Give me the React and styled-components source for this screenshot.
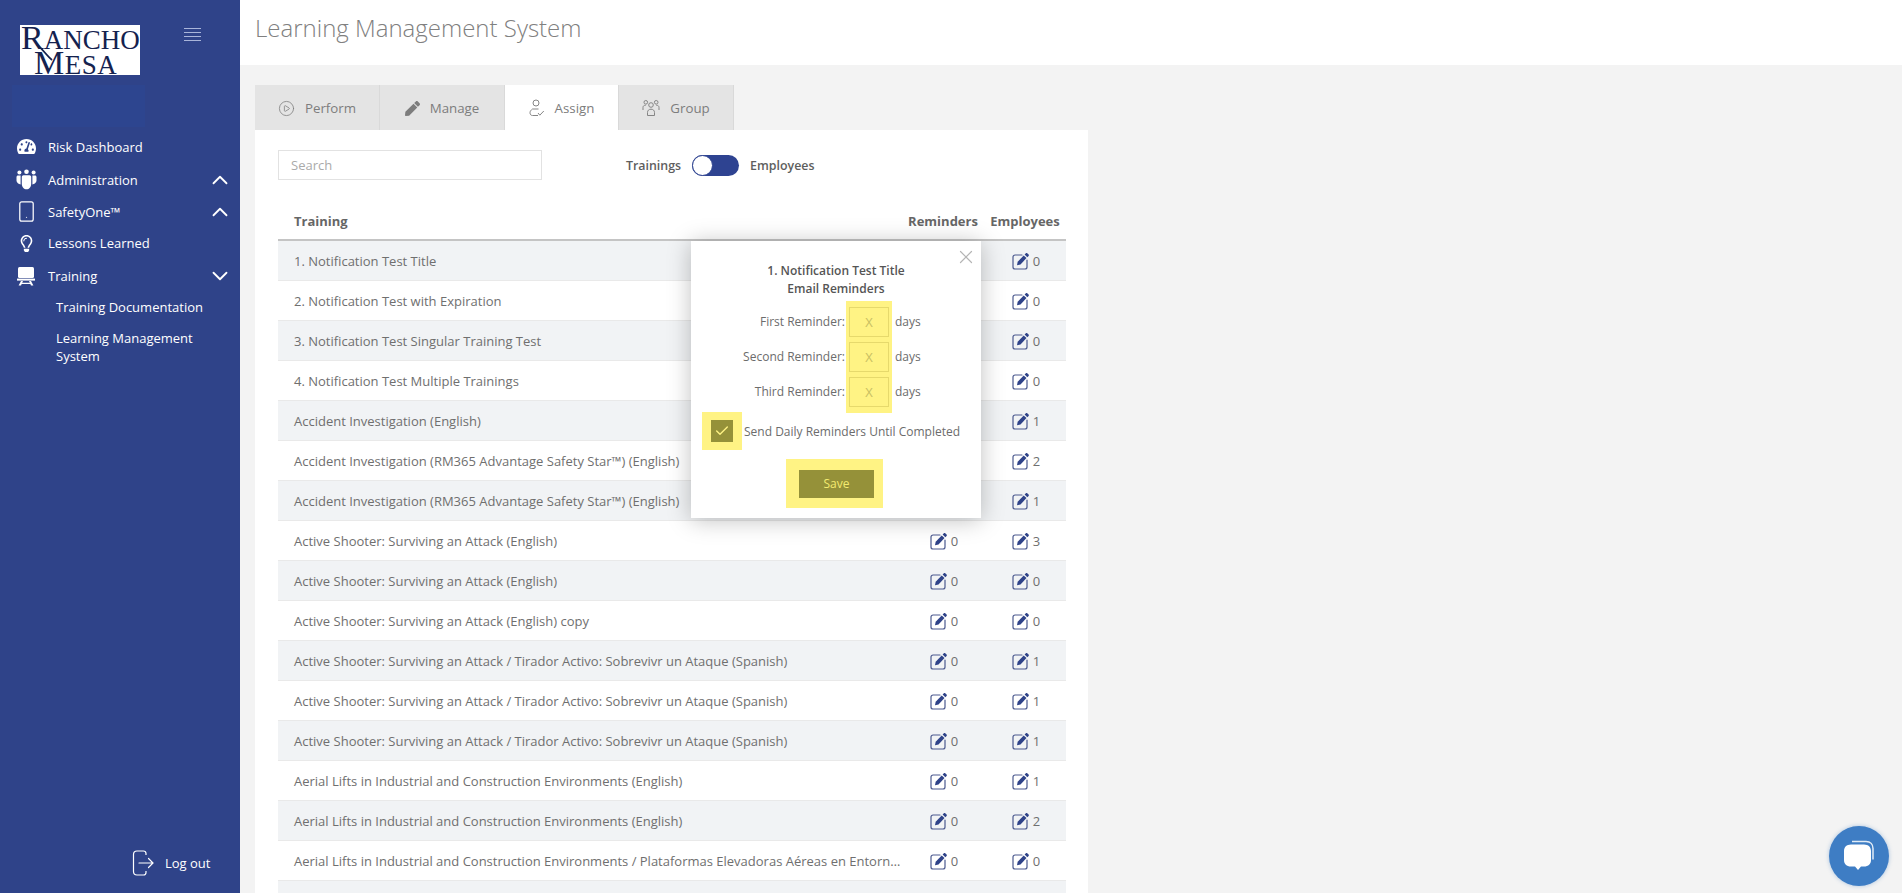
import React from "react";
import styled, { createGlobalStyle } from "styled-components";
import { FaTachometerAlt, FaPen, FaRegLightbulb } from "react-icons/fa";
import { Check, ChevronDown, ChevronUp, CirclePlay, Smartphone, X } from "lucide-react";

const NAVY = "#2f4389";
const YELLOW = "#fff384";
const OLIVE = "#959139";

const trainings = [
  ["1. Notification Test Title", 0, 0],
  ["2. Notification Test with Expiration", 0, 0],
  ["3. Notification Test Singular Training Test", 0, 0],
  ["4. Notification Test Multiple Trainings", 0, 0],
  ["Accident Investigation (English)", 0, 1],
  ["Accident Investigation (RM365 Advantage Safety Star™) (English)", 0, 2],
  ["Accident Investigation (RM365 Advantage Safety Star™) (English)", 0, 1],
  ["Active Shooter: Surviving an Attack (English)", 0, 3],
  ["Active Shooter: Surviving an Attack (English)", 0, 0],
  ["Active Shooter: Surviving an Attack (English) copy", 0, 0],
  ["Active Shooter: Surviving an Attack / Tirador Activo: Sobrevivr un Ataque (Spanish)", 0, 1],
  ["Active Shooter: Surviving an Attack / Tirador Activo: Sobrevivr un Ataque (Spanish)", 0, 1],
  ["Active Shooter: Surviving an Attack / Tirador Activo: Sobrevivr un Ataque (Spanish)", 0, 1],
  ["Aerial Lifts in Industrial and Construction Environments (English)", 0, 1],
  ["Aerial Lifts in Industrial and Construction Environments (English)", 0, 2],
  ["Aerial Lifts in Industrial and Construction Environments / Plataformas Elevadoras Aéreas en Entornos de Construcción", 0, 0],
  ["", null, null],
];

const GlobalStyle = createGlobalStyle`
  html, body {
    margin: 0;
    height: 100%;
    overflow: hidden;
    background: #f3f3f3;
    font-family: "Open Sans", "Liberation Sans", sans-serif;
  }
  * { box-sizing: border-box; }
`;

const EditIcon = () => (
  <svg width="18" height="18" viewBox="0 0 18 18" fill="none">
    <path
      d="M10 3H3a2 2 0 0 0-2 2v10a2 2 0 0 0 2 2h10a2 2 0 0 0 2-2V8"
      stroke="#4c5a8f"
      strokeWidth="1.2"
      strokeLinecap="round"
    />
    <path d="M5 13.2l.7-3.4 6-6.4 2.8 2.7-6 6.3z" fill={NAVY} />
    <path d="M12.6 2.5l1.3-1.3c.4-.4 1-.4 1.3 0l1.4 1.4c.4.4.4.9 0 1.3l-1.3 1.3z" fill={NAVY} />
  </svg>
);

const PeopleIcon = () => (
  <svg width="21" height="21" viewBox="0 0 21 21" fill="#fff">
    <circle cx="3.400" cy="3.400" r="2" />
    <circle cx="10.500" cy="2.800" r="2.300" />
    <circle cx="17.600" cy="3.400" r="2" />
    <path d="M.5 8c0-1 .7-1.600 1.500-1.600h2.600v9.200L3.300 15C1.600 14.400.5 13 .5 11.500z" />
    <path d="M20.500 8c0-1-.7-1.600-1.500-1.600h-2.600v9.200l1.300-.6c1.700-.6 2.800-2 2.800-3.500z" />
    <path d="M5.800 8c0-1 .8-1.700 1.700-1.700h6c.9 0 1.700.7 1.700 1.700v6.700c0 3.200-2.200 5.600-4.700 5.600s-4.700-2.400-4.700-5.600z" />
  </svg>
);

const BoardIcon = () => (
  <svg width="18" height="20" viewBox="0 0 18 20" fill="#fff">
    <rect x="1" y="1" width="16" height="11" rx="1.500" />
    <rect x="0" y="12.600" width="18" height="2" />
    <path d="M4 15h2l-2 4.600H1.600zM14 15h-2l2 4.600h2.400zM5 16.800h8V18H5z" />
  </svg>
);

const LogoutIcon = () => (
  <svg width="22" height="26" viewBox="0 0 22 26" fill="none" stroke="#fff" strokeWidth="1.2">
    <path d="M14 5V3.500C14 2 13 1 11.500 1H5C2.800 1 1.500 2.500 1.500 4.500v17C1.500 23.500 2.800 25 5 25h6.500c1.500 0 2.500-1 2.500-2.500V21" />
    <path d="M7 13h13.500M16.500 8.500l4.500 4.500-4.500 4.500" strokeLinecap="round" />
  </svg>
);

const AssignIcon = () => (
  <svg width="16" height="18" viewBox="0 0 16 18" fill="none" stroke="#858585" strokeWidth="1">
    <circle cx="7" cy="4" r="3" />
    <path d="M3.500 10h6M3.500 10c-1.500 1-2.500 2.300-2.500 3.700 0 1.800 1 2.800 2.500 2.800H9" />
    <path d="M9 14l1.800 2.200 4-4.200" />
  </svg>
);

const GroupIcon = () => (
  <svg width="18" height="18" viewBox="0 0 18 18" fill="none" stroke="#858585" strokeWidth="1">
    <circle cx="9" cy="6" r="2.300" />
    <path d="M5.500 16.500v-3c0-2 1.300-3.300 3.500-3.300s3.500 1.300 3.500 3.300v3z" />
    <circle cx="3.800" cy="3.300" r="1.800" />
    <circle cx="14.200" cy="3.300" r="1.800" />
    <path d="M1 11V8.500C1 7 2 6.200 3.800 6.200M17 11V8.500c0-1.500-1-2.300-2.800-2.300" />
  </svg>
);

const ChatIcon = () => (
  <svg width="34" height="32" viewBox="0 0 34 32" fill="#fff">
    <path
      d="M10 1.500h14c4.500 0 7 3 7 7v11"
      fill="none"
      stroke="#fff"
      strokeWidth="1.500"
      opacity="0.85"
    />
    <path d="M9 4.500h13c4.500 0 7 2.800 7 6.500v9c0 4-2.500 6.500-7 6.500h-3L16 30l-3-3.500H9c-4.500 0-7-2.500-7-6.500v-9c0-3.700 2.500-6.500 7-6.500z" />
  </svg>
);

const App = () => {
  return (
    <Page>
      <GlobalStyle />
      <Sidebar>
        <SideTop>
          <Logo>
            <LogoLine>
              <LogoCap>R</LogoCap>ANCHO
            </LogoLine>
            <LogoLine indent>
              <LogoCap>M</LogoCap>ESA
            </LogoLine>
            <LogoSwash viewBox="0 0 120 50" fill="none" stroke="#14224f">
              <path d="M17 20c5 3 9 10 15 15" strokeWidth="1.800" />
            </LogoSwash>
          </Logo>
          <Burger>
            <span />
            <span />
            <span />
            <span />
          </Burger>
        </SideTop>
        <LogoShade />
        <Nav>
          <NavItem height={33}>
            <NavIcon><FaTachometerAlt size={19} /></NavIcon>
            Risk Dashboard
          </NavItem>
          <NavItem height={33}>
            <NavIcon><PeopleIcon /></NavIcon>
            Administration
            <NavArrow><ChevronUp size={26} strokeWidth={1.700} /></NavArrow>
          </NavItem>
          <NavItem height={31}>
            <NavIcon><Smartphone size={23} strokeWidth={1.300} /></NavIcon>
            SafetyOne™
            <NavArrow><ChevronUp size={26} strokeWidth={1.700} /></NavArrow>
          </NavItem>
          <NavItem height={32}>
            <NavIcon><FaRegLightbulb size={17} /></NavIcon>
            Lessons Learned
          </NavItem>
          <NavItem height={33}>
            <NavIcon><BoardIcon /></NavIcon>
            Training
            <NavArrow><ChevronDown size={26} strokeWidth={1.700} /></NavArrow>
          </NavItem>
          <SubItem>Training Documentation</SubItem>
          <SubItem>Learning Management System</SubItem>
        </Nav>
        <Logout>
          <LogoutIcon />
          Log out
        </Logout>
      </Sidebar>

      <Main>
        <Header>Learning Management System</Header>
        <Content>
          <Tabs>
            <Tab width={125}><CirclePlay size={17} strokeWidth={1.100} />Perform</Tab>
            <Tab width={125}><FaPen size={15} />Manage</Tab>
            <Tab width={114} active><AssignIcon />Assign</Tab>
            <Tab width={115}><GroupIcon />Group</Tab>
          </Tabs>
          <Panel>
            <Controls>
              <Search>Search</Search>
              <ToggleWrap>
                <ToggleLabel>Trainings</ToggleLabel>
                <Toggle><Knob /></Toggle>
                <ToggleLabel>Employees</ToggleLabel>
              </ToggleWrap>
            </Controls>
            <TableWrap>
              <TableHead>
                <HeadTitle>Training</HeadTitle>
                <HeadCell>Reminders</HeadCell>
                <HeadCell>Employees</HeadCell>
              </TableHead>
              {trainings.map(([title, reminders, employees], i) => (
                <Row key={i} striped={i % 2 === 0}>
                  <RowTitle>{title}</RowTitle>
                  <Count>
                    {reminders !== null && <><EditIcon />{reminders}</>}
                  </Count>
                  <Count>
                    {employees !== null && <><EditIcon />{employees}</>}
                  </Count>
                </Row>
              ))}

              <Modal>
                <CloseBtn><X size={22} strokeWidth={1.300} /></CloseBtn>
                <ModalTitle>
                  1. Notification Test Title
                  <br />
                  Email Reminders
                </ModalTitle>
                <Form>
                  <LabelCol>
                    <FormText>First Reminder:</FormText>
                    <FormText>Second Reminder:</FormText>
                    <FormText>Third Reminder:</FormText>
                  </LabelCol>
                  <InputCol>
                    <DayInput>X</DayInput>
                    <DayInput>X</DayInput>
                    <DayInput>X</DayInput>
                  </InputCol>
                  <DaysCol>
                    <FormText>days</FormText>
                    <FormText>days</FormText>
                    <FormText>days</FormText>
                  </DaysCol>
                </Form>
                <CheckRow>
                  <CheckHighlight>
                    <CheckBox><Check size={16} strokeWidth={2} /></CheckBox>
                  </CheckHighlight>
                  <CheckLabel>Send Daily Reminders Until Completed</CheckLabel>
                </CheckRow>
                <SaveHighlight>
                  <SaveBtn>Save</SaveBtn>
                </SaveHighlight>
              </Modal>
            </TableWrap>
          </Panel>
        </Content>
      </Main>

      <ChatBubble><ChatIcon /></ChatBubble>
    </Page>
  );
};

const Page = styled.div`
  display: flex;
  height: 100vh;
  overflow: hidden;
`;

const Sidebar = styled.aside`
  width: 240px;
  flex-shrink: 0;
  background: ${NAVY};
  color: #fff;
  display: flex;
  flex-direction: column;
  padding-top: 25px;
`;

const SideTop = styled.div`
  display: flex;
  align-items: flex-start;
  padding-left: 20px;
  height: 50px;
`;

const Logo = styled.div`
  position: relative;
  width: 120px;
  height: 50px;
  background: #fff;
  color: #14224f;
  font-family: "Liberation Serif", serif;
  display: flex;
  flex-direction: column;
`;

const LogoLine = styled.div`
  font-size: 27px;
  line-height: 25px;
  height: 25px;
  white-space: nowrap;
  letter-spacing: ${({ indent }) => (indent ? "0.5px" : "0")};
  padding-left: ${({ indent }) => (indent ? "14px" : "1px")};
`;

const LogoCap = styled.span`
  font-size: 34px;
`;

const LogoSwash = styled.svg`
  position: absolute;
  inset: 0;
  width: 100%;
  height: 100%;
`;

const Burger = styled.div`
  margin: 3px 0 0 44px;
  width: 17px;
  display: flex;
  flex-direction: column;
  gap: 3px;

  span {
    display: block;
    height: 1px;
    background: #a9b5da;
  }
`;

const LogoShade = styled.div`
  height: 42px;
  margin: 10px 95px 0 12px;
  background: #2d458f;
`;

const Nav = styled.nav`
  display: flex;
  flex-direction: column;
  margin-top: 3px;
  font-size: 13px;
`;

const NavItem = styled.div`
  height: ${({ height }) => height}px;
  display: flex;
  align-items: center;
  padding: 0 7px 0 16px;
`;

const NavIcon = styled.span`
  width: 20px;
  margin-right: 12px;
  flex-shrink: 0;
  display: flex;
  justify-content: center;

  svg {
    flex-shrink: 0;
  }
`;

const NavArrow = styled.span`
  margin-left: auto;
  display: flex;
`;

const SubItem = styled.div`
  padding: 0 30px 0 56px;
  line-height: 18px;
  margin: 6px 0 7px;
  font-size: 13px;
`;

const Logout = styled.div`
  margin-top: auto;
  margin-bottom: 17px;
  padding-left: 132px;
  display: flex;
  align-items: center;
  gap: 11px;
  font-size: 13px;
`;

const Main = styled.main`
  flex: 1;
  min-width: 0;
  display: flex;
  flex-direction: column;
`;

const Header = styled.header`
  height: 65px;
  flex-shrink: 0;
  background: #fff;
  color: #808080;
  font-size: 24px;
  font-weight: 300;
  padding: 9px 0 0 15px;
  line-height: 38px;
`;

const Content = styled.div`
  padding: 20px 0 0 15px;
`;

const Tabs = styled.div`
  display: flex;
  height: 45px;
`;

const Tab = styled.div`
  width: ${({ width }) => width}px;
  background: ${({ active }) => (active ? "#fff" : "#e4e4e4")};
  border-right: 1px solid #d9d9d9;
  color: #7d7d7d;
  font-size: 13.300px;
  display: flex;
  align-items: center;
  justify-content: center;
  gap: 10px;
  padding-top: 1px;
`;

const Panel = styled.section`
  width: 833px;
  height: 800px;
  background: #fff;
  padding: 20px 0 0 23px;
`;

const Controls = styled.div`
  display: flex;
  align-items: center;
  height: 30px;
`;

const Search = styled.div`
  width: 264px;
  height: 30px;
  border: 1px solid #e2e2e2;
  color: #aaa;
  font-size: 13px;
  line-height: 28px;
  padding-left: 12px;
`;

const ToggleWrap = styled.div`
  display: flex;
  align-items: center;
  gap: 11px;
  margin-left: 84px;
`;

const ToggleLabel = styled.span`
  font-size: 12.400px;
  font-weight: 600;
  color: #5e5e5e;
`;

const Toggle = styled.div`
  width: 47px;
  height: 21px;
  border-radius: 11px;
  background: #2e4391;
  display: flex;
`;

const Knob = styled.div`
  width: 21px;
  height: 21px;
  border-radius: 50%;
  background: #fff;
  border: 1px solid #2e4391;
`;

const TableWrap = styled.div`
  position: relative;
  margin-top: 25px;
  width: 788px;
`;

const gridCols = "1fr 82px 82px";

const TableHead = styled.div`
  display: grid;
  grid-template-columns: ${gridCols};
  align-items: center;
  height: 36px;
  border-bottom: 2px solid #c4c4c4;
  font-size: 13px;
  font-weight: 700;
  color: #666;
  padding-bottom: 3px;
`;

const HeadTitle = styled.div`
  padding-left: 16px;
`;

const HeadCell = styled.div`
  text-align: center;
`;

const Row = styled.div`
  display: grid;
  grid-template-columns: ${gridCols};
  align-items: center;
  height: 40px;
  background: ${({ striped }) => (striped ? "#f1f3f5" : "#fff")};
  border-bottom: 1px solid #e9e9e9;
  font-size: 13px;
  color: #6f6f6f;
`;

const RowTitle = styled.div`
  padding-left: 16px;
  overflow: hidden;
  white-space: nowrap;
  text-overflow: ellipsis;
`;

const Count = styled.div`
  display: flex;
  align-items: center;
  justify-content: center;
  gap: 3px;
  padding-left: 2px;
`;

const Modal = styled.div`
  position: absolute;
  left: 413px;
  top: 36px;
  width: 290px;
  height: 277px;
  background: #fff;
  box-shadow: 0 2px 22px rgba(0, 0, 0, 0.25);
  display: flex;
  flex-direction: column;
  padding-top: 21px;
  color: #6c6c6c;
  font-size: 12px;
`;

const CloseBtn = styled.span`
  position: absolute;
  top: 5px;
  right: 4px;
  color: #b5b5b5;
  display: flex;
`;

const ModalTitle = styled.div`
  text-align: center;
  font-weight: 600;
  color: #555;
  line-height: 18px;
`;

const Form = styled.div`
  display: flex;
  margin-top: 3px;
`;

const LabelCol = styled.div`
  width: 155px;
  display: flex;
  flex-direction: column;
  gap: 5px;
  padding: 6px 1px 0 0;
  text-align: right;
`;

const DaysCol = styled.div`
  display: flex;
  flex-direction: column;
  gap: 5px;
  padding: 6px 0 0 3px;
`;

const FormText = styled.div`
  height: 30px;
  line-height: 30px;
  white-space: nowrap;
`;

const InputCol = styled.div`
  width: 46px;
  background: ${YELLOW};
  display: flex;
  flex-direction: column;
  gap: 5px;
  padding: 6px 3px;
`;

const DayInput = styled.div`
  height: 30px;
  border: 1px solid #e6d96c;
  text-align: center;
  line-height: 28px;
  color: #c9bf62;
  font-size: 13px;
`;

const CheckRow = styled.div`
  display: flex;
  align-items: center;
  padding-left: 11px;
  margin-top: -1px;
`;

const CheckHighlight = styled.div`
  width: 40px;
  height: 38px;
  background: ${YELLOW};
  display: flex;
  align-items: center;
  justify-content: center;
`;

const CheckBox = styled.div`
  width: 22px;
  height: 22px;
  background: ${OLIVE};
  color: ${YELLOW};
  display: flex;
  align-items: center;
  justify-content: center;
`;

const CheckLabel = styled.span`
  margin-left: 2px;
  padding-top: 1px;
  white-space: nowrap;
`;

const SaveHighlight = styled.div`
  align-self: flex-start;
  width: 97px;
  height: 49px;
  margin: 9px 0 0 95px;
  padding-left: 13px;
  background: ${YELLOW};
  display: flex;
  align-items: center;
`;

const SaveBtn = styled.div`
  width: 75px;
  height: 28px;
  background: ${OLIVE};
  color: #f3ea70;
  font-size: 12px;
  text-align: center;
  line-height: 28px;
`;

const ChatBubble = styled.div`
  position: fixed;
  left: 1829px;
  top: 826px;
  width: 60px;
  height: 60px;
  border-radius: 50%;
  background: #3e7dc4;
  box-shadow: 0 0 4px rgba(62, 125, 196, 0.4);
  display: flex;
  align-items: center;
  justify-content: center;
`;

export default App;
